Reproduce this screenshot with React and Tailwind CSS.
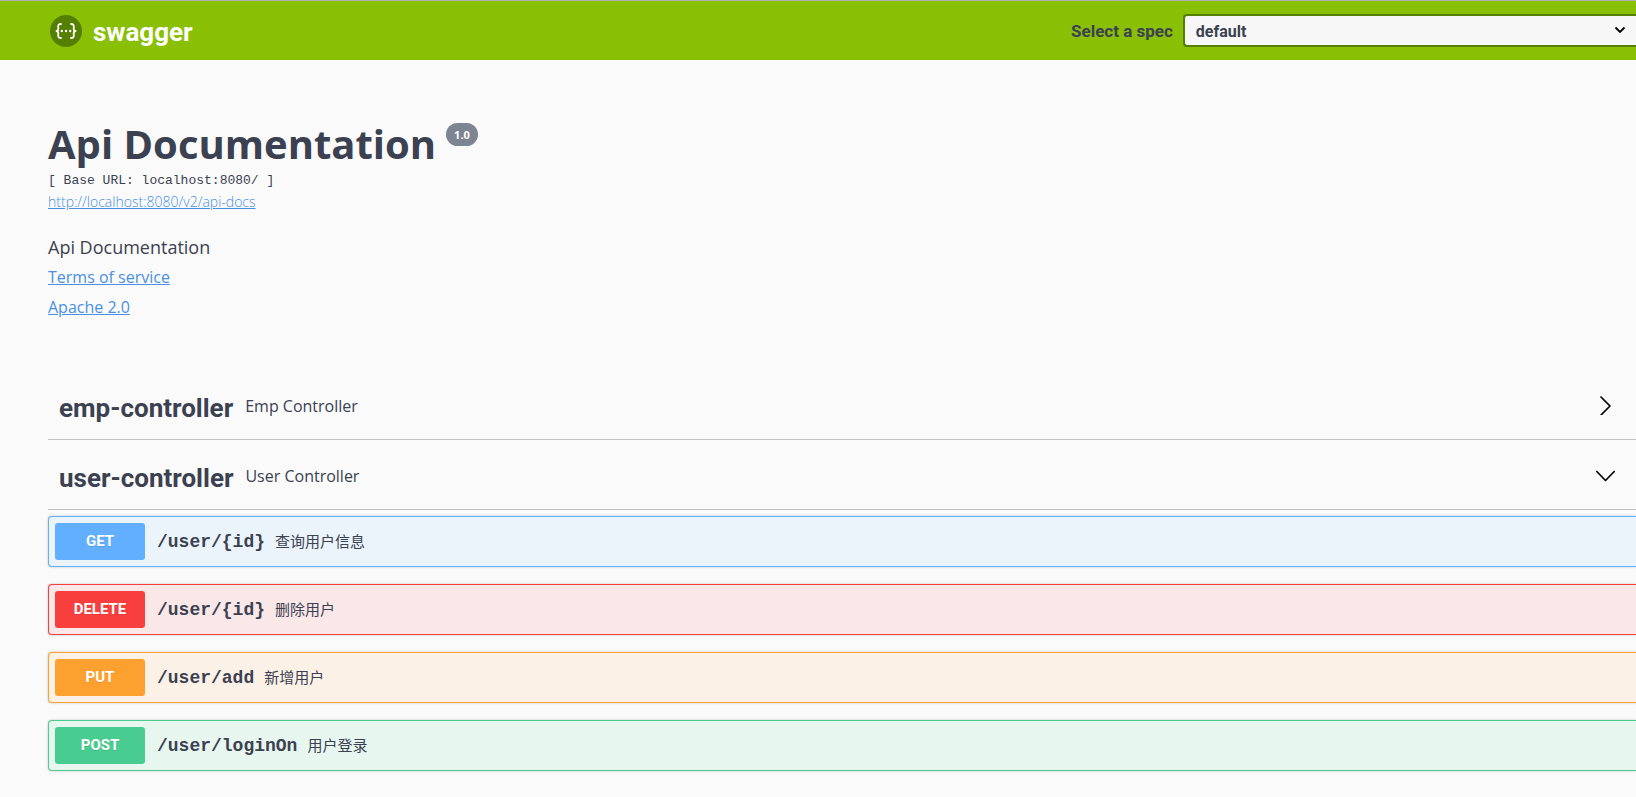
import React, { useState } from "react";

const methodStyles = {
  GET: { row: "border-[#61affe] bg-[#ebf3fb]", badge: "bg-[#61affe]" },
  DELETE: { row: "border-[#f93e3e] bg-[#fae7e7]", badge: "bg-[#f93e3e]" },
  PUT: { row: "border-[#fca130] bg-[#fbf1e6]", badge: "bg-[#fca130]" },
  POST: { row: "border-[#49cc90] bg-[#e8f6f0]", badge: "bg-[#49cc90]" },
};

const controllers = [
  { name: "emp-controller", description: "Emp Controller", operations: [] },
  {
    name: "user-controller",
    description: "User Controller",
    operations: [
      { method: "GET", path: "/user/{id}", summary: "查询用户信息" },
      { method: "DELETE", path: "/user/{id}", summary: "删除用户" },
      { method: "PUT", path: "/user/add", summary: "新增用户" },
      { method: "POST", path: "/user/loginOn", summary: "用户登录" },
    ],
  },
];

const Logo = () => (
  <svg className="size-8" viewBox="0 0 32 32" fill="none" aria-hidden="true">
    <circle cx="16" cy="16" r="16" fill="#547f00" />
    <g stroke="#fff" strokeWidth="1.8" strokeLinecap="round" strokeLinejoin="round">
      <path d="M11 9c-2.2 0-2.9.8-2.8 2.7l.1 1.700c0 1.600-.4 2.400-1.800 2.600 1.400.2 1.800 1 1.800 2.600l-.1 1.700c-.1 1.900.6 2.700 2.800 2.700" />
      <path d="M21 9c2.200 0 2.900.8 2.800 2.700l-.1 1.700c0 1.600.4 2.400 1.800 2.600-1.400.2-1.800 1-1.800 2.600l.1 1.700c.1 1.900-.6 2.700-2.800 2.700" />
    </g>
    <g fill="#fff">
      <circle cx="11.800" cy="16" r="1.200" />
      <circle cx="16" cy="16" r="1.200" />
      <circle cx="20.200" cy="16" r="1.200" />
    </g>
  </svg>
);

const Arrow = ({ open }) => (
  <svg
    className="size-5"
    viewBox="0 0 20 20"
    fill="none"
    stroke="#000"
    strokeWidth="1.7"
    strokeLinecap="round"
    strokeLinejoin="round"
    aria-hidden="true"
  >
    <path d={open ? "M.8 6.500l8.700 9 8.700-9" : "M5 2l9 9-9 9"} />
  </svg>
);

const Topbar = () => {
  const [spec, setSpec] = useState("default");

  return (
    <header className="flex h-[60px] items-center justify-between border-t border-[#b0b0b0] bg-[#89bf04]">
      <a href="#" className="flex items-center gap-[11px] pl-[50px] text-[26px] font-bold text-white">
        <Logo />
        <span className="pt-1">swagger</span>
      </a>
      <div className="flex w-[565px] items-center gap-[10px]">
        <label htmlFor="spec" className="shrink-0 pt-[2px] text-[17px] font-bold">
          Select a spec
        </label>
        <div className="relative grow">
          <select
            id="spec"
            value={spec}
            onChange={(e) => setSpec(e.target.value)}
            className="block h-[33px] w-full appearance-none rounded-l border-2 border-r-0 border-[#547f00] bg-[#f7f7f7] pt-[2px] pl-[11px] text-base leading-6 font-bold"
          >
            <option value="default">default</option>
          </select>
          <svg
            className="pointer-events-none absolute top-3 right-[10px] h-2 w-3"
            viewBox="0 0 12 8"
            fill="none"
            stroke="#000"
            strokeWidth="1.8"
            aria-hidden="true"
          >
            <path d="M1.5 1.5l4.500 4.500 4.500-4.500" />
          </svg>
        </div>
      </div>
    </header>
  );
};

const Info = () => (
  <section className="pt-[58px]">
    <div className="flex items-start gap-[10px]">
      <h1 className="font-['Open_Sans',sans-serif] text-[40px] leading-[52px] font-bold">Api Documentation</h1>
      <span className="mt-[5px] rounded-full bg-[#7d8492] px-2 font-['Open_Sans',sans-serif] text-[11px] leading-[23px] font-bold text-white">
        1.0
      </span>
    </div>
    <pre className="font-['Liberation_Mono',monospace] text-[13px] leading-[21px]">[ Base URL: localhost:8080/ ]</pre>
    <div className="flex flex-col items-start font-['Open_Sans',sans-serif] text-base text-[#4990e2]">
      <a href="#" className="text-sm leading-[22px] font-light underline">
        http://localhost:8080/v2/api-docs
      </a>
      <p className="mt-[19px] text-[18px] leading-[30px] text-[#3b4151]">Api Documentation</p>
      <a href="#" className="leading-[30px] underline">
        Terms of service
      </a>
      <a href="#" className="leading-[30px] underline">
        Apache 2.0
      </a>
    </div>
  </section>
);

const Operation = ({ item }) => {
  const style = methodStyles[item.method];

  return (
    <button
      className={`${style.row} mb-[17px] flex w-full items-center rounded-l border border-r-0 p-[6px] text-left shadow-[0_0_3px_rgba(0,0,0,0.19)]`}
    >
      <span
        className={`${style.badge} w-[90px] rounded-[3px] text-center text-[15px] leading-[37px] font-bold text-white [text-shadow:0_1px_0_rgba(0,0,0,0.1)]`}
      >
        {item.method}
      </span>
      <span className="ml-3 font-['Liberation_Mono',monospace] text-lg font-bold">{item.path}</span>
      <span className="ml-[10px] font-['Open_Sans','Noto_Sans_CJK_SC',sans-serif] text-[15px]">{item.summary}</span>
    </button>
  );
};

const Controller = ({ item, defaultOpen }) => {
  const [open, setOpen] = useState(defaultOpen);

  return (
    <section>
      <h2 className="border-b border-[#bfc0c4]">
        <button
          className="flex h-[69px] w-full items-center pr-5 pl-[11px] text-left"
          aria-expanded={open}
          onClick={() => setOpen(!open)}
        >
          <span className="pt-2 text-[26px] font-bold">{item.name}</span>
          <span className="ml-3 grow pt-[2px] font-['Open_Sans',sans-serif] text-base">{item.description}</span>
          <Arrow open={open} />
        </button>
      </h2>
      {open && (
        <div className="pt-[6px]">
          {item.operations.map((op, i) => (
            <Operation key={i} item={op} />
          ))}
        </div>
      )}
    </section>
  );
};

const App = () => {
  return (
    <div className="min-h-screen bg-[#fafafa] font-['Roboto','Open_Sans',sans-serif] text-[#3b4151]">
      <Topbar />
      <main className="pl-12">
        <Info />
        <div className="mt-12">
          {controllers.map((c) => (
            <Controller key={c.name} item={c} defaultOpen={c.name === "user-controller"} />
          ))}
        </div>
      </main>
    </div>
  );
};

export default App;
